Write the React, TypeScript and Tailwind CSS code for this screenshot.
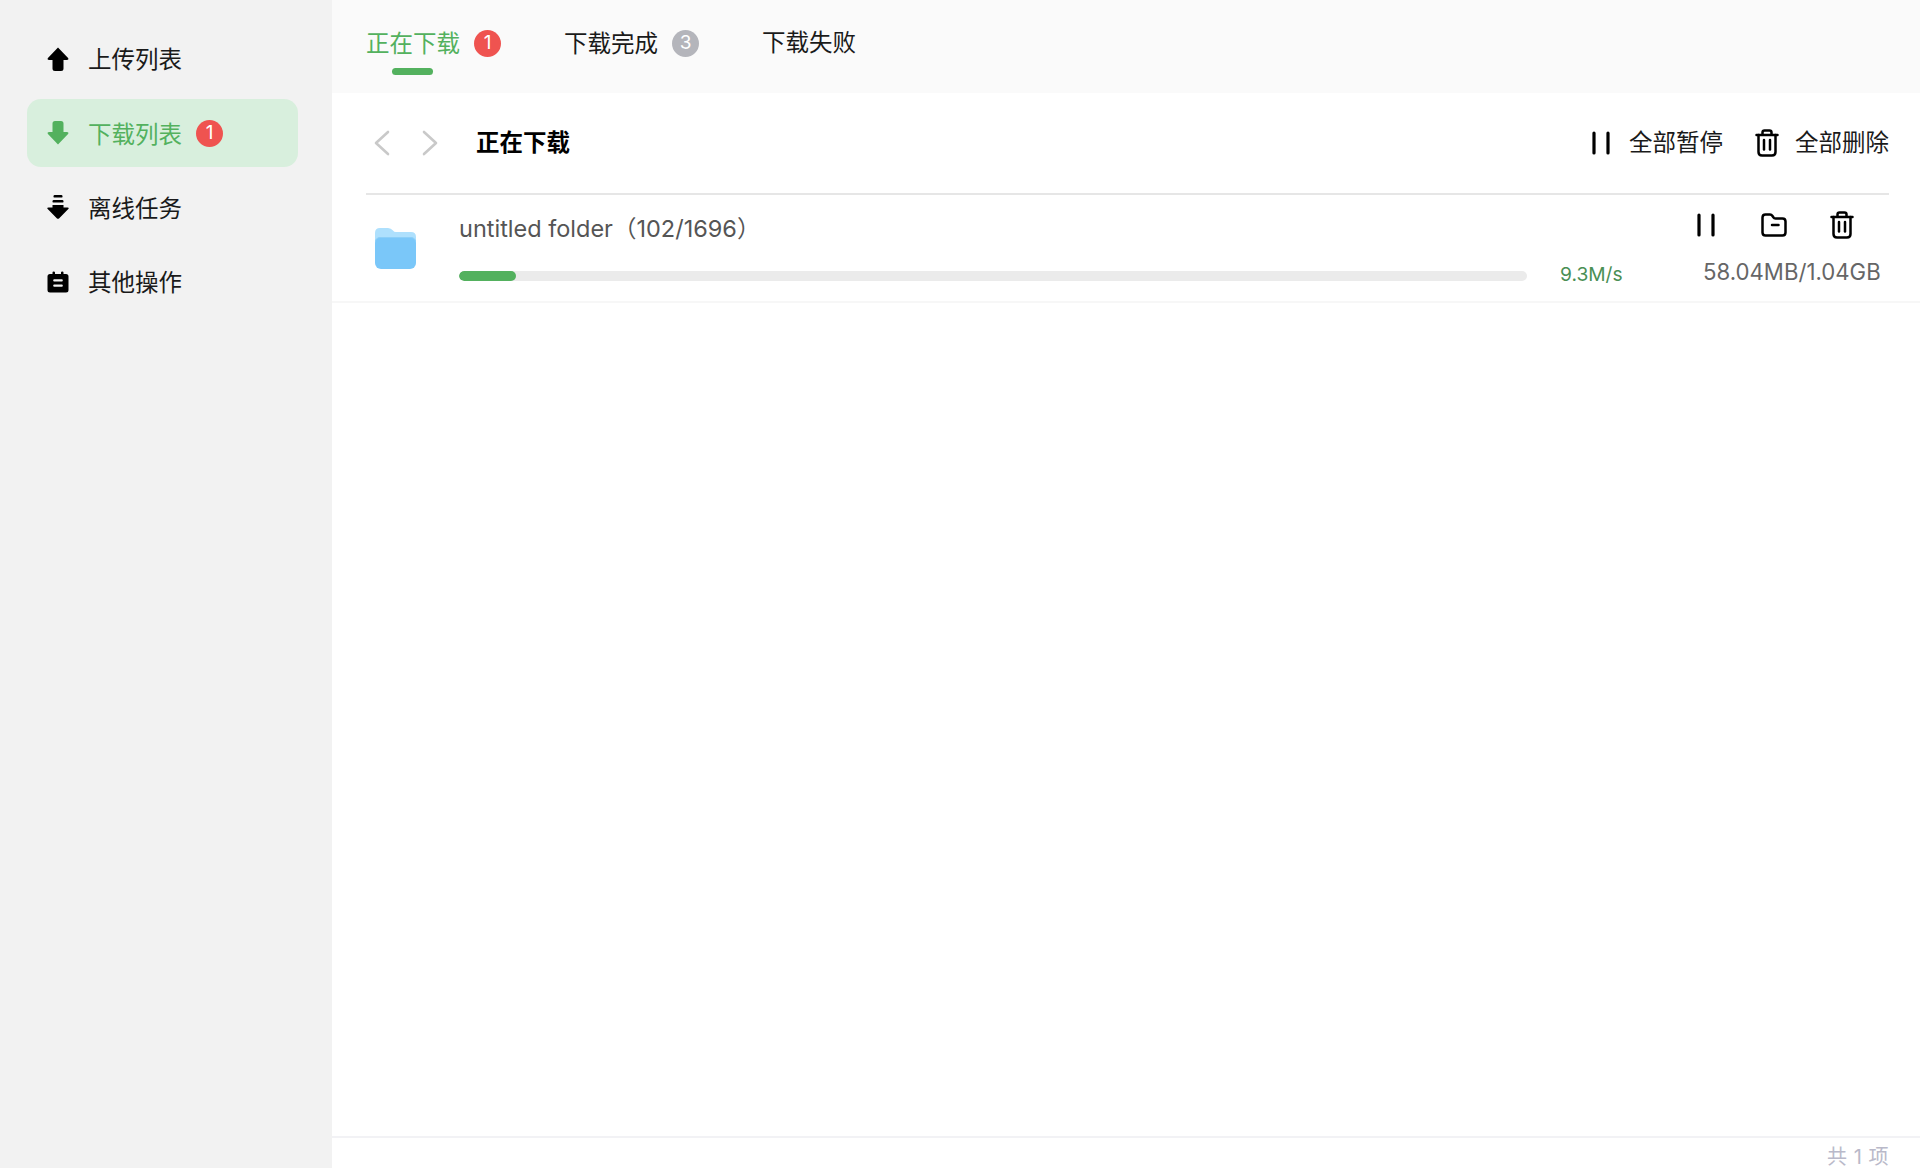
import React from 'react';

const font = { fontFamily: '"Inter", "Noto Sans CJK SC", sans-serif' };

const UploadIcon = ({ className = '' }: { className?: string }) => (
  <svg viewBox="0 0 22 24" className={className} fill="currentColor">
    <path d="M11 0.5 L21.3 11.3 Q22 13 20 13 L16.5 13 L16.5 21.5 Q16.5 24 14 24 L8 24 Q5.5 24 5.5 21.5 L5.5 13 L2 13 Q0 13 0.7 11.3 Z" />
  </svg>
);

const DownloadIcon = ({ className = '' }: { className?: string }) => (
  <svg viewBox="0 0 22 24" className={className} fill="currentColor">
    <path d="M11 23.5 L21.3 12.7 Q22 11 20 11 L16.5 11 L16.5 2.5 Q16.5 0 14 0 L8 0 Q5.5 0 5.5 2.5 L5.5 11 L2 11 Q0 11 0.7 12.7 Z" />
  </svg>
);

const OfflineIcon = ({ className = '' }: { className?: string }) => (
  <svg viewBox="0 0 22 24" className={className} fill="currentColor">
    <rect x="6.5" y="0" width="9" height="2.6" rx="1.2" />
    <rect x="5.5" y="5" width="11" height="2.6" rx="1.2" />
    <path d="M5.5 10 L16.5 10 L16.5 12.5 L20.5 12.5 Q22.5 12.5 21.3 14 L12 23.5 Q11 24 10 23.5 L0.7 14 Q-0.5 12.5 1.5 12.5 L5.5 12.5 Z" />
  </svg>
);

const OtherIcon = ({ className = '' }: { className?: string }) => (
  <svg viewBox="0 0 22 24" className={className}>
    <path
      fill="currentColor"
      d="M3 4 L5.5 4 L5.5 2.6 Q5.5 1.4 6.7 1.4 Q8 1.4 8 2.6 L8 4 L14 4 L14 2.6 Q14 1.4 15.3 1.4 Q16.5 1.4 16.5 2.6 L16.5 4 L19 4 Q21.5 4 21.5 6.5 L21.5 20 Q21.5 22.5 19 22.5 L3 22.5 Q0.5 22.5 0.5 20 L0.5 6.5 Q0.5 4 3 4 Z"
    />
    <rect x="6.2" y="9.2" width="9.6" height="2.3" rx="1" fill="#f2f2f2" />
    <rect x="6.2" y="14.4" width="9.6" height="2.3" rx="1" fill="#f2f2f2" />
  </svg>
);

const PauseIcon = ({ className = '' }: { className?: string }) => (
  <svg viewBox="0 0 18 24" className={className} fill="none" stroke="currentColor" strokeWidth="3.2" strokeLinecap="round">
    <path d="M2 2 L2 22" />
    <path d="M16 2 L16 22" />
  </svg>
);

const TrashIcon = ({ className = '' }: { className?: string }) => (
  <svg viewBox="0 0 24 28" className={className} fill="none" stroke="currentColor" strokeWidth="2.5" strokeLinecap="round" strokeLinejoin="round">
    <path d="M1.5 6 L22.5 6" />
    <path d="M7.5 5.5 L7.5 3.5 Q7.5 1.5 9.5 1.5 L14.5 1.5 Q16.5 1.5 16.5 3.5 L16.5 5.5" />
    <path d="M3.5 6 L3.5 23 Q3.5 26.5 7 26.5 L17 26.5 Q20.5 26.5 20.5 23 L20.5 6" />
    <path d="M9 11 L9 20.5" />
    <path d="M15 11 L15 20.5" />
  </svg>
);

const FolderLineIcon = ({ className = '' }: { className?: string }) => (
  <svg viewBox="0 0 26 24" className={className} fill="none" stroke="currentColor" strokeWidth="2.5" strokeLinecap="round" strokeLinejoin="round">
    <path d="M1.5 4.5 Q1.5 1.5 4.5 1.5 L9 1.5 Q10.5 1.5 11.5 3 L12.5 4.5 Q13 5.5 14.5 5.5 L21.5 5.5 Q24.5 5.5 24.5 8.5 L24.5 19.5 Q24.5 22.5 21.5 22.5 L4.5 22.5 Q1.5 22.5 1.5 19.5 Z" />
    <path d="M11 12 L17.5 12" />
  </svg>
);

const BlueFolder = () => (
  <svg viewBox="0 0 41 41" className="h-[41px] w-[41px] shrink-0">
    <path fill="#aee0fd" d="M5 0 L13 0 Q16 0 18 2.5 Q19 4 21 4 L36 4 Q41 4 41 9 L41 20 L0 20 L0 5 Q0 0 5 0 Z" />
    <rect x="0" y="9" width="41" height="32" rx="6" fill="#7ac7f9" />
    <path d="M0.5 13 Q1 9.5 6 9.5 L35 9.5 Q40 9.5 40.5 13" fill="none" stroke="#8ccff8" strokeWidth="1" />
  </svg>
);

const Badge = ({ n, gray = false }: { n: number; gray?: boolean }) => (
  <span
    className={`flex h-[27px] w-[27px] items-center justify-center rounded-full text-[19px] text-white ${
      gray ? 'bg-[#b4b5bb]' : 'bg-[#ef5350]'
    }`}
  >
    {n}
  </span>
);

const Sidebar = () => {
  const items = [
    { label: '上传列表', icon: UploadIcon },
    { label: '下载列表', icon: DownloadIcon, active: true, badge: 1 },
    { label: '离线任务', icon: OfflineIcon },
    { label: '其他操作', icon: OtherIcon },
  ];
  return (
    <aside className="flex w-[332px] shrink-0 flex-col gap-[6.2px] bg-[#f2f2f2] pt-[25px]">
      {items.map((item) => {
        const Icon = item.icon;
        return (
          <div
            key={item.label}
            className={`ml-[27px] flex h-[68px] w-[271px] items-center rounded-[14px] pl-[19.5px] ${
              item.active ? 'bg-[#d8efdd] text-[#53b15e]' : 'text-[#1a1a1a]'
            }`}
          >
            <Icon className={`h-[24px] w-[22px] ${item.active ? 'text-[#53b15e]' : 'text-black'}`} />
            <span className="ml-[19.5px] pt-[2px] text-[23.5px]">{item.label}</span>
            {item.badge && (
              <span className="ml-[14px]">
                <Badge n={item.badge} />
              </span>
            )}
          </div>
        );
      })}
    </aside>
  );
};

const Tabs = () => (
  <div className="flex h-[93px] items-start bg-[#fafafa] pl-[34px] pt-[28px]">
    <div className="relative flex items-center">
      <span className="pt-[2px] text-[23.5px] leading-[28px] text-[#53b15e]">正在下载</span>
      <span className="ml-[14px]">
        <Badge n={1} />
      </span>
      <span className="absolute left-[26px] top-[40px] h-[7px] w-[41px] rounded-full bg-[#53b15e]" />
    </div>
    <div className="ml-[63px] flex items-center">
      <span className="pt-[2px] text-[23.5px] leading-[28px] text-[#1a1a1a]">下载完成</span>
      <span className="ml-[14px]">
        <Badge n={3} gray />
      </span>
    </div>
    <span className="ml-[63px] pt-[1px] text-[23.5px] leading-[28px] text-[#1a1a1a]">下载失败</span>
  </div>
);

const Toolbar = () => (
  <div className="ml-[34px] mr-[31px] flex h-[102px] items-center border-b-2 border-[#e6e6e6]">
    <svg viewBox="0 0 18 26" className="ml-[7px] h-[26px] w-[18px] text-[#c9c9c9]" fill="none" stroke="currentColor" strokeWidth="2.6" strokeLinecap="round" strokeLinejoin="round">
      <path d="M15 2 L3 13 L15 24" />
    </svg>
    <svg viewBox="0 0 18 26" className="ml-[30px] h-[26px] w-[18px] text-[#c9c9c9]" fill="none" stroke="currentColor" strokeWidth="2.6" strokeLinecap="round" strokeLinejoin="round">
      <path d="M3 2 L15 13 L3 24" />
    </svg>
    <span className="ml-[37px] text-[23.5px] font-bold text-black">正在下载</span>
    <div className="ml-auto flex items-center text-[23.5px] text-[#1a1a1a]">
      <PauseIcon className="h-[24px] w-[18px] text-black" />
      <span className="ml-[19px]">全部暂停</span>
      <TrashIcon className="ml-[32px] h-[28px] w-[24px] text-black" />
      <span className="ml-[16px]">全部删除</span>
    </div>
  </div>
);

const TaskRow = () => (
  <div className="flex h-[108px] items-center border-b-2 border-[#f7f7f7] pl-[43px] pr-[10px]">
    <BlueFolder />
    <div className="ml-[43px] flex w-[1068px] flex-col">
      <span className="text-[23.5px] leading-[28px] text-[#555555]">untitled folder（102/1696）</span>
      <div className="mt-[28px] h-[10px] w-full overflow-hidden rounded-full bg-[#ebebeb]">
        <div className="h-full w-[57px] rounded-full bg-[#53b15e]" />
      </div>
    </div>
    <span className="ml-[33px] mt-[52px] text-[19.2px] text-[#4a8f54]">9.3M/s</span>
    <div className="ml-auto mr-[30px] flex w-[183px] flex-col items-start">
      <div className="flex items-center text-black">
        <PauseIcon className="h-[24px] w-[18px]" />
        <FolderLineIcon className="ml-[46px] h-[24px] w-[26px]" />
        <TrashIcon className="ml-[43px] h-[28px] w-[24px]" />
      </div>
      <span className="ml-[6px] mt-[19px] text-[22.2px] leading-[28px] text-[#666666]">58.04MB/1.04GB</span>
    </div>
  </div>
);

const App = () => (
  <div className="flex h-[1168px] w-[1920px] overflow-hidden bg-white" style={font}>
    <Sidebar />
    <main className="flex min-w-0 flex-1 flex-col">
      <Tabs />
      <Toolbar />
      <TaskRow />
      <div className="flex-1" />
      <div className="flex h-[32px] justify-end border-t-2 border-[#f2f2f5] pr-[31px] pt-[8px] text-[20px] leading-[22px] tracking-[0.5px] text-[#b9b9c9]">
        共 1 项
      </div>
    </main>
  </div>
);

export default App;
